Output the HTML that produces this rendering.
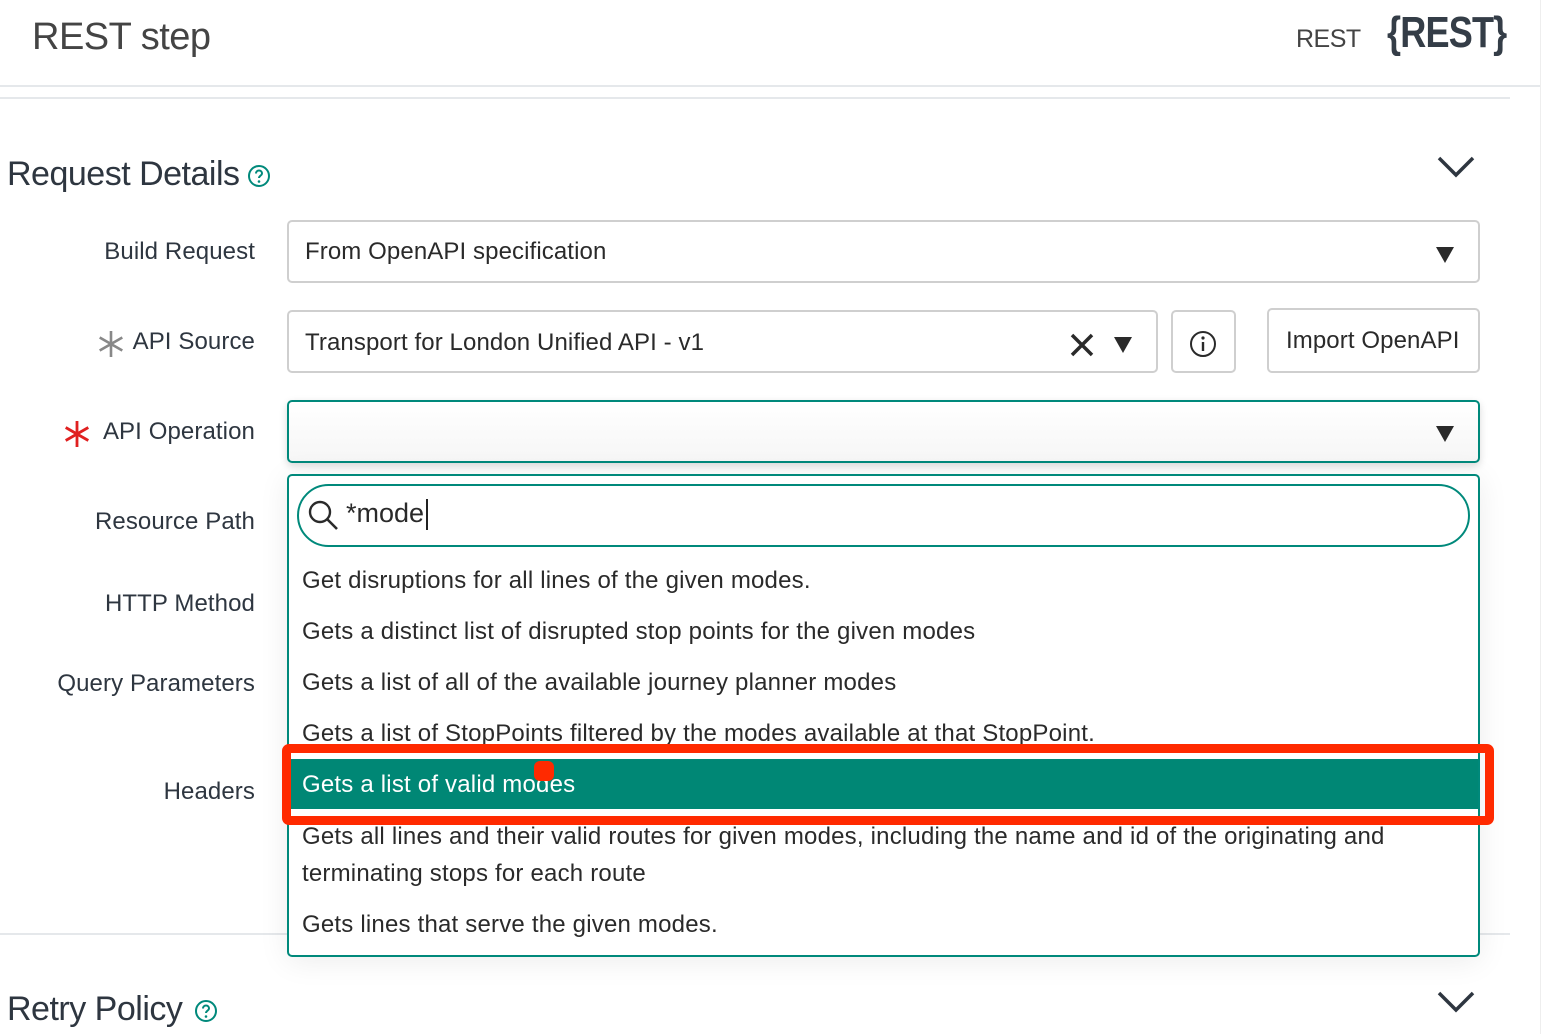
<!DOCTYPE html>
<html><head><meta charset="utf-8"><style>
*{box-sizing:border-box;margin:0;padding:0}
body{width:1550px;height:1034px;background:#fff;font-family:"Liberation Sans",sans-serif;color:#2e3640;position:relative;overflow:hidden}
.a{position:absolute}
.lbl{position:absolute;right:1295px;font-size:24px;color:#2e3640;letter-spacing:0.1px;white-space:nowrap}
.box{position:absolute;border:2px solid #cfcfcf;border-radius:5px;background:#fff}
.t{font-size:24px;letter-spacing:0.1px;white-space:nowrap;color:#2a2a2a}
.tri{position:absolute;width:0;height:0;border-left:9px solid transparent;border-right:9px solid transparent;border-top:16px solid #2a2a2a}
.item{position:absolute;left:302px;font-size:24px;letter-spacing:0.2px;white-space:nowrap;color:#2a2a2a}
</style></head><body>
<div class="a" style="left:32px;top:16px;font-size:38px;color:#444;letter-spacing:-0.5px">REST step</div>
<div class="a" style="left:1296px;top:25px;font-size:25px;color:#444;letter-spacing:-0.5px">REST</div>
<div class="a" style="left:1387px;top:8px;font-size:44px;color:#343d47;font-weight:bold;letter-spacing:-1px;transform:scaleX(0.82);transform-origin:left top">{REST}</div>
<div class="a" style="left:0;top:85px;width:1540px;height:2px;background:#e5e8eb"></div>
<div class="a" style="left:0;top:97px;width:1510px;height:2px;background:#e5e8eb"></div>
<div class="a" style="left:1540px;top:0;width:1px;height:1034px;background:#eee"></div>

<div class="a" style="left:7px;top:155px;font-size:34px;letter-spacing:-0.5px">Request Details</div>
<svg class="a" style="left:247px;top:164px" width="24" height="24" viewBox="0 0 24 24"><circle cx="12" cy="12" r="10" fill="none" stroke="#00897b" stroke-width="2"/><path d="M9 9.5a3 3 0 0 1 6 0c0 2-3 2.3-3 4.5" fill="none" stroke="#00897b" stroke-width="2"/><circle cx="12" cy="17.5" r="1.3" fill="#00897b"/></svg>
<svg class="a" style="left:1437px;top:155px" width="38" height="24" viewBox="0 0 38 24"><path d="M2 3L19 20L36 3" fill="none" stroke="#2e3640" stroke-width="3.5"/></svg>

<div class="lbl" style="top:238px">Build Request</div>
<div class="box" style="left:287px;top:220px;width:1193px;height:63px"><div class="t a" style="left:16px;top:16px">From OpenAPI specification</div><div class="tri" style="right:24px;top:25px"></div></div>

<div class="lbl" style="top:328px">API Source</div>
<svg class="a" style="left:97px;top:330px" width="28" height="28" viewBox="0 0 28 28"><path d="M14 1V27M2.7 7.5L25.3 20.5M2.7 20.5L25.3 7.5" stroke="#888" stroke-width="2.6"/></svg>
<div class="box" style="left:287px;top:310px;width:871px;height:63px"><div class="t a" style="left:16px;top:17px">Transport for London Unified API - v1</div>
<svg class="a" style="left:780px;top:20px" width="26" height="26" viewBox="0 0 26 26"><path d="M3 3L23 23M23 3L3 23" stroke="#2a2a2a" stroke-width="3.5"/></svg><div class="tri" style="left:825px;top:25px"></div></div>
<div class="box" style="left:1171px;top:310px;width:65px;height:63px"><svg class="a" style="left:16px;top:18px" width="28" height="28" viewBox="0 0 28 28"><circle cx="14" cy="14" r="12" fill="none" stroke="#2a2a2a" stroke-width="2"/><path d="M14 12v9" stroke="#2a2a2a" stroke-width="2.4"/><circle cx="14" cy="8" r="1.6" fill="#2a2a2a"/></svg></div>
<div class="box" style="left:1267px;top:308px;width:213px;height:65px"><div class="t a" style="left:17px;top:17px">Import OpenAPI</div></div>

<div class="lbl" style="top:418px">API Operation</div>
<svg class="a" style="left:63px;top:420px" width="28" height="28" viewBox="0 0 28 28"><path d="M14 1V27M2.7 7.5L25.3 20.5M2.7 20.5L25.3 7.5" stroke="#e02020" stroke-width="2.8"/></svg>
<div class="box" style="left:287px;top:400px;width:1193px;height:63px;border-color:#00897b;box-shadow:0 3px 8px rgba(0,0,0,.15);background:linear-gradient(#fff,#f6f6f6)"><div class="tri" style="right:24px;top:24px"></div></div>

<div class="lbl" style="top:508px">Resource Path</div>
<div class="lbl" style="top:590px">HTTP Method</div>
<div class="lbl" style="top:670px">Query Parameters</div>
<div class="lbl" style="top:778px">Headers</div>
<div class="a" style="left:0;top:933px;width:1510px;height:2px;background:#e5e8eb"></div>

<div class="box" style="left:287px;top:474px;width:1193px;height:483px;border-color:#00897b;box-shadow:0 4px 30px rgba(0,0,0,.08)"></div>
<div class="a" style="left:297px;top:484px;width:1173px;height:63px;border:2px solid #00897b;border-radius:32px"></div>
<svg class="a" style="left:307px;top:499px" width="34" height="34" viewBox="0 0 34 34"><circle cx="13" cy="13" r="10" fill="none" stroke="#2a2a2a" stroke-width="2.4"/><path d="M20.5 20.5L30 30" stroke="#2a2a2a" stroke-width="2.6"/></svg>
<div class="a" style="left:346px;top:498px;font-size:27px;color:#2a2a2a">*mode</div>
<div class="a" style="left:426px;top:499px;width:2px;height:31px;background:#222"></div>

<div class="item" style="top:567px">Get disruptions for all lines of the given modes.</div>
<div class="item" style="top:618px">Gets a distinct list of disrupted stop points for the given modes</div>
<div class="item" style="top:669px">Gets a list of all of the available journey planner modes</div>
<div class="item" style="top:720px">Gets a list of StopPoints filtered by the modes available at that StopPoint.</div>
<div class="a" style="left:289px;top:759px;width:1189px;height:50px;background:#008775"></div>
<div class="item" style="top:771px;color:#fff">Gets a list of valid modes</div>
<div class="a" style="left:282px;top:744px;width:1212px;height:81px;border:9px solid #ff2a00;border-radius:7px"></div>
<div class="a" style="left:534px;top:761px;width:20px;height:20px;background:#ff2a00;border-radius:6px"></div>
<div class="item" style="top:823px">Gets all lines and their valid routes for given modes, including the name and id of the originating and</div>
<div class="item" style="top:860px">terminating stops for each route</div>
<div class="item" style="top:911px">Gets lines that serve the given modes.</div>

<div class="a" style="left:7px;top:990px;font-size:34px;letter-spacing:-0.5px">Retry Policy</div>
<svg class="a" style="left:194px;top:999px" width="24" height="24" viewBox="0 0 24 24"><circle cx="12" cy="12" r="10" fill="none" stroke="#00897b" stroke-width="2"/><path d="M9 9.5a3 3 0 0 1 6 0c0 2-3 2.3-3 4.5" fill="none" stroke="#00897b" stroke-width="2"/><circle cx="12" cy="17.5" r="1.3" fill="#00897b"/></svg>
<svg class="a" style="left:1437px;top:990px" width="38" height="24" viewBox="0 0 38 24"><path d="M2 3L19 20L36 3" fill="none" stroke="#2e3640" stroke-width="3.5"/></svg>
</body></html>
